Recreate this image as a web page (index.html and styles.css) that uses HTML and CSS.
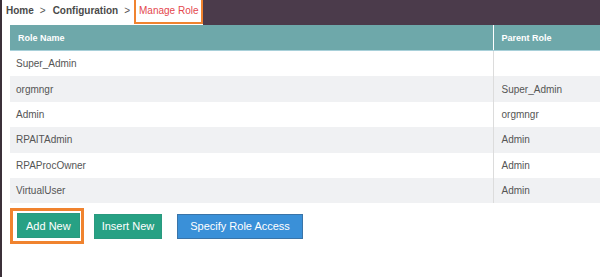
FILE: index.html
```
<!DOCTYPE html>
<html lang="en">

<head>
    <meta charset="UTF-8">
    <meta name="viewport" content="width=device-width, initial-scale=1.0">
    <title>Manage Role</title>
    <link rel="stylesheet" href="styles.css">
</head>

<body>
    <div class="page">
        <div class="topbar">
            <nav class="crumbs">
                <a class="crumb" href="#">Home</a>
                <span class="sep">&gt;</span>
                <a class="crumb" href="#">Configuration</a>
                <span class="sep">&gt;</span>
                <span class="crumb-active">Manage Role</span>
            </nav>
            <div class="topbar-fill"></div>
        </div>

        <table class="roles">
            <colgroup>
                <col class="col-name">
                <col>
            </colgroup>
            <thead>
                <tr>
                    <th>Role Name</th>
                    <th>Parent Role</th>
                </tr>
            </thead>
            <tbody>
                <tr><td>Super_Admin</td><td></td></tr>
                <tr><td>orgmngr</td><td>Super_Admin</td></tr>
                <tr><td>Admin</td><td>orgmngr</td></tr>
                <tr><td>RPAITAdmin</td><td>Admin</td></tr>
                <tr><td>RPAProcOwner</td><td>Admin</td></tr>
                <tr><td>VirtualUser</td><td>Admin</td></tr>
            </tbody>
        </table>

        <div class="actions">
            <div class="highlight">
                <button class="btn btn-green">Add New</button>
            </div>
            <button class="btn btn-green btn-insert">Insert New</button>
            <button class="btn btn-blue">Specify Role Access</button>
        </div>
    </div>
</body>

</html>
```

FILE: styles.css
```
body {
    font-family: "Liberation Sans", Arial, sans-serif;
    background-color: #fff;
    margin: 0;
    padding: 0;
}

.page {
    min-height: 277px;
    border-left: 2px solid #3b3039;
    box-sizing: border-box;
}

/* breadcrumb strip */
.topbar {
    display: flex;
    height: 25px;
}

.crumbs {
    display: flex;
    align-items: flex-start;
    padding-left: 4px;
    background-color: #fff;
    font-size: 10px;
    line-height: 21px;
}

.crumb {
    color: #4a4a4a;
    font-weight: bold;
    text-decoration: none;
}

.sep {
    color: #555;
    margin: 0 7px 0 6px;
}

.crumb-active {
    color: #e4474d;
    margin-left: -3px;
    padding: 0 2px 1px 3px;
    border: 2px solid #f0832f;
    border-top: none;
}

.topbar-fill {
    flex: 1;
    background-color: #4b3b4b;
}

/* roles table */
.roles {
    width: 590px;
    margin-left: 8px;
    border-collapse: collapse;
    table-layout: fixed;
}

.col-name {
    width: 483px;
}

.roles th {
    height: 25px;
    padding: 0 8px;
    background-color: #6ea8aa;
    border-bottom: 1px solid #a8d0d9;
    color: #fff;
    font-size: 9px;
    font-weight: bold;
    text-align: left;
}

.roles th:first-child {
    border-right: 1px solid #fff;
}

.roles td {
    height: 25.4px;
    padding: 0 6px;
    color: #555;
    font-size: 10px;
}

.roles td:first-child {
    border-right: 1px solid #dcdcdc;
}

.roles td + td {
    padding-left: 8px;
}

.roles tbody tr:nth-child(even) {
    background-color: #f0f1f3;
}

/* buttons */
.actions {
    display: flex;
    align-items: center;
    margin-top: 5px;
    padding-left: 8px;
}

.highlight {
    padding: 2px 1px 3px 4px;
    border: 3px solid #f0832f;
}

.btn {
    height: 25px;
    padding: 0 8px;
    border: 1px solid transparent;
    color: #fff;
    font-family: "Liberation Sans", Arial, sans-serif;
    font-size: 11px;
    cursor: pointer;
}

.btn-green {
    background-color: #27a184;
    border-color: #2a9a7f;
}

.btn-insert {
    margin-left: 10px;
    padding: 0 7px;
}

.btn-blue {
    margin-left: 15px;
    padding: 0 12px;
    background-color: #3a90d8;
    border-color: #3a74a8;
}
```
